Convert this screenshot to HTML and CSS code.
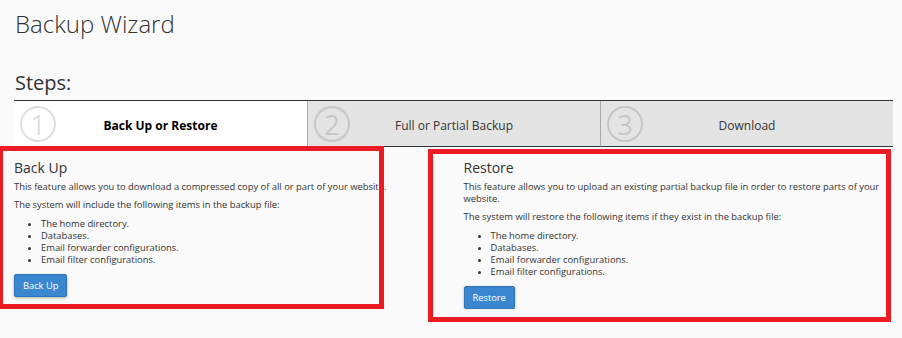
FILE: index.html
```html
<!DOCTYPE html>
<html lang="en">
<head>
    <meta charset="UTF-8">
    <meta name="viewport" content="width=device-width, initial-scale=1.0">
    <title>Backup Wizard</title>
    <link rel="stylesheet" href="styles.css">
</head>
<body>
    <div class="page">
        <h1 class="page-title">Backup Wizard</h1>
        <h2 class="steps-title">Steps:</h2>

        <div class="steps">
            <div class="step active">
                <span class="step-num">1</span>
                <span class="step-label">Back Up or Restore</span>
            </div>
            <div class="step">
                <span class="step-num">2</span>
                <span class="step-label">Full or Partial Backup</span>
            </div>
            <div class="step">
                <span class="step-num">3</span>
                <span class="step-label">Download</span>
            </div>
        </div>

        <div class="content">
            <div class="panel">
                <h3>Back Up</h3>
                <p>This feature allows you to download a compressed copy of all or part of your website.</p>
                <p>The system will include the following items in the backup file:</p>
                <ul>
                    <li>The home directory.</li>
                    <li>Databases.</li>
                    <li>Email forwarder configurations.</li>
                    <li>Email filter configurations.</li>
                </ul>
                <button class="btn">Back Up</button>
            </div>
            <div class="panel">
                <h3>Restore</h3>
                <p>This feature allows you to upload an existing partial backup file in order to restore parts of your website.</p>
                <p>The system will restore the following items if they exist in the backup file:</p>
                <ul>
                    <li>The home directory.</li>
                    <li>Databases.</li>
                    <li>Email forwarder configurations.</li>
                    <li>Email filter configurations.</li>
                </ul>
                <button class="btn">Restore</button>
            </div>
        </div>
    </div>

    <!-- red annotation frames drawn over the screenshot -->
    <div class="mark mark-left"></div>
    <div class="mark mark-right"></div>
</body>
</html>
```

FILE: styles.css
```css
*{
    box-sizing: border-box;
    font-family: 'Open Sans', 'Liberation Sans', sans-serif;
}
body{
    margin: 0;
    background: #fafafa;
    color: #333;
}

.page{
    padding: 9px 9px 0 14px;
}

.page-title{
    margin: 0 0 0 1px;
    font-size: 24px;
    font-weight: 300;
    line-height: 29px;
}

.steps-title{
    margin: 33px 0 5px 1px;
    font-size: 20px;
    font-weight: 400;
    line-height: 24px;
}

.steps{
    display: grid;
    grid-template-columns: repeat(3, 1fr);
    border-top: 1px solid #333;
}

.step{
    display: grid;
    grid-template-columns: 36px 1fr 36px;
    align-items: center;
    height: 46px;
    padding: 0 6px;
    background: #e4e4e4;
    border-left: 1px solid #aaa;
    border-bottom: 1px solid #333;
}
.step.active{
    background: #fff;
    border-left: none;
    border-bottom: none;
}

.step-num{
    display: flex;
    align-items: center;
    justify-content: center;
    width: 36px;
    height: 36px;
    border: 2px solid rgba(0,0,0,0.13);
    border-radius: 50%;
    color: rgba(0,0,0,0.15);
    font-size: 28px;
    font-weight: 400;
    line-height: 1;
}

.step-label{
    text-align: center;
    font-size: 12px;
    padding-top: 3px;
}
.step.active .step-label{
    font-weight: 700;
    color: #000;
}

.content{
    display: grid;
    grid-template-columns: 1fr 1fr;
    column-gap: 20px;
    padding-top: 12px;
}

.panel h3{
    margin: 0 0 5px;
    font-size: 14px;
    font-weight: 400;
    line-height: 17px;
}
.panel p{
    margin: 0 0 6px;
    font-size: 9.4px;
    line-height: 12px;
}
.panel ul{
    margin: 7px 0 6px;
    padding-left: 27px;
    font-size: 9.4px;
    line-height: 12px;
}

.btn{
    height: 23px;
    padding: 0 8px;
    font-size: 9.3px;
    color: #fff;
    background: #3a87cf;
    border: 1px solid #2e74b6;
    border-radius: 2px;
    box-shadow: 0 1px 3px rgba(0,0,0,0.3);
    cursor: pointer;
}

.mark{
    position: absolute;
    border: 5px solid #ed1c24;
}
.mark-left{
    left: -2px;
    top: 146px;
    width: 386px;
    height: 163px;
}
.mark-right{
    left: 428px;
    top: 149px;
    width: 463px;
    height: 173px;
}
```
